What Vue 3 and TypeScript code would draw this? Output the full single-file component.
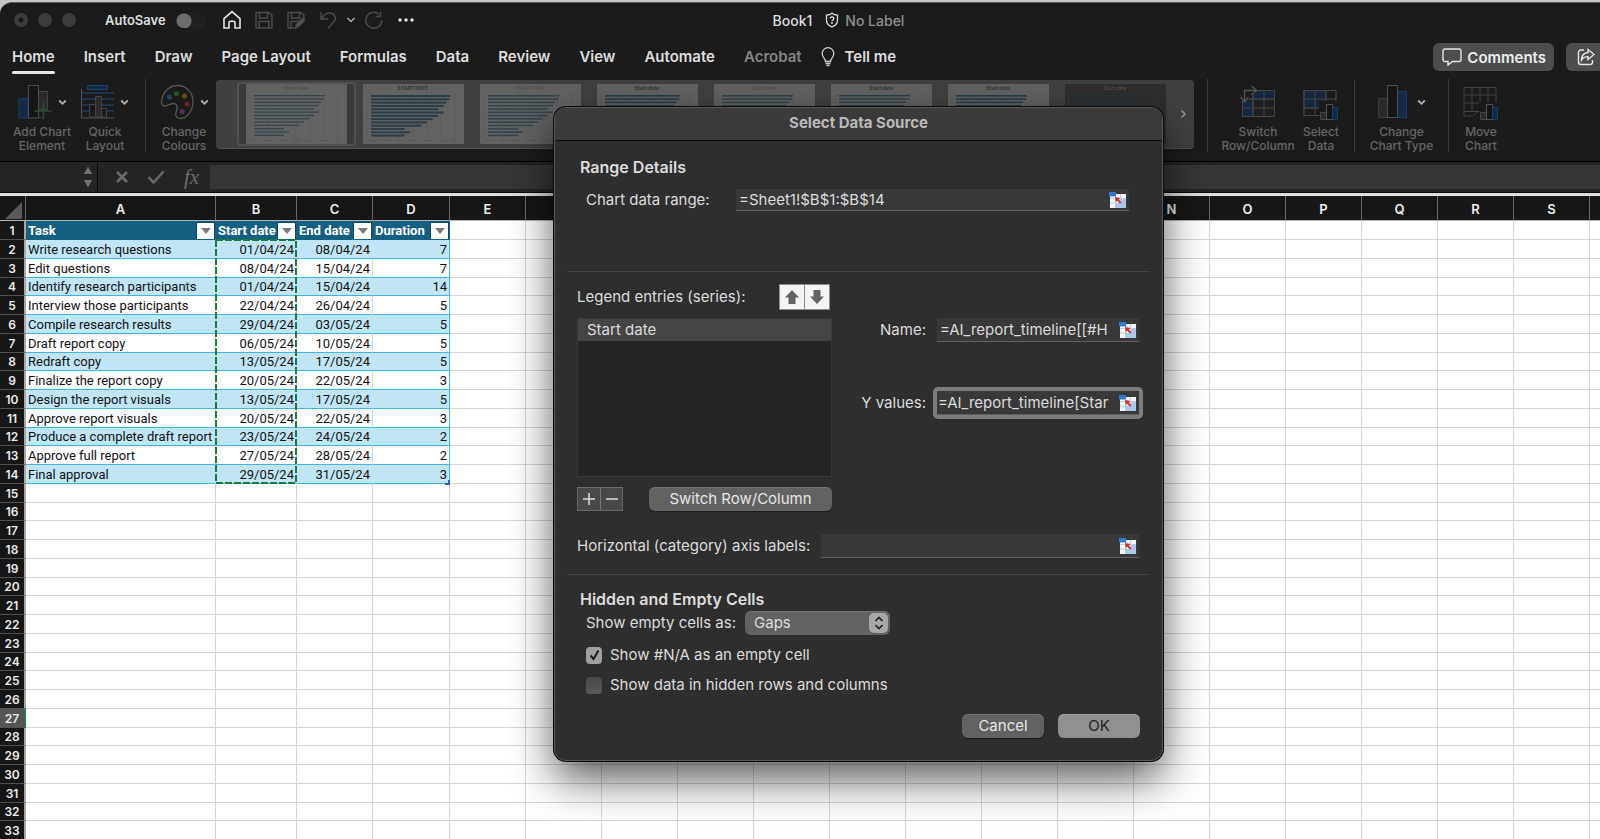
<script setup lang="ts">
import { ref } from 'vue'

const tabs = ['Home', 'Insert', 'Draw', 'Page Layout', 'Formulas', 'Data', 'Review', 'View', 'Automate', 'Acrobat']

// Columns F to M lie under the dialog, so their letters stay blank.
const columns = ['A', 'B', 'C', 'D', 'E', '', '', '', '', '', '', '', '', 'N', 'O', 'P', 'Q', 'R', 'S', '']
const headings = ['Task', 'Start date', 'End date', 'Duration']
const tasks: [string, string, string, number][] = [
  ['Write research questions', '01/04/24', '08/04/24', 7],
  ['Edit questions', '08/04/24', '15/04/24', 7],
  ['Identify research participants', '01/04/24', '15/04/24', 14],
  ['Interview those participants', '22/04/24', '26/04/24', 5],
  ['Compile research results', '29/04/24', '03/05/24', 5],
  ['Draft report copy', '06/05/24', '10/05/24', 5],
  ['Redraft copy', '13/05/24', '17/05/24', 5],
  ['Finalize the report copy', '20/05/24', '22/05/24', 3],
  ['Design the report visuals', '13/05/24', '17/05/24', 5],
  ['Approve report visuals', '20/05/24', '22/05/24', 3],
  ['Produce a complete draft report', '23/05/24', '24/05/24', 2],
  ['Approve full report', '27/05/24', '28/05/24', 2],
  ['Final approval', '29/05/24', '31/05/24', 3],
]
const emptyRows = Array.from({ length: 19 }, (_, i) => i + 15)

interface Thumb { title: string; kind: string; thick: number; scale: number }
const thumbs: Thumb[] = [
  { title: 'Start date', kind: 'soft', thick: 1.3, scale: 1 },
  { title: 'START DATE', kind: 'bold', thick: 2, scale: 1.12 },
  { title: 'START DATE', kind: 'soft', thick: 1.6, scale: 1 },
  { title: 'Start date', kind: 'bold', thick: 1.6, scale: 1.06 },
  { title: 'Start date', kind: 'soft', thick: 1.6, scale: 1 },
  { title: 'Start date', kind: 'bold', thick: 1.3, scale: 1 },
  { title: 'Start date', kind: 'bold', thick: 1.6, scale: 1 },
  { title: 'Start date', kind: 'dark', thick: 1.3, scale: 1 },
]
const bars = [71, 70, 67, 65, 60, 65, 60, 55, 50, 45, 30, 35, 30]

const range = ref('=Sheet1!$B$1:$B$14')
const seriesName = ref('=AI_report_timeline[[#H')
const yValues = ref('=AI_report_timeline[Star')
const axisLabels = ref('')
const emptyAs = ref('Gaps')
const showNa = ref(true)
const showHidden = ref(false)
</script>

<template>
  <div class="window">
    <header class="titlebar">
      <div class="lights"><i class="dot"></i><i></i><i></i></div>
      <label class="autosave">AutoSave <input type="checkbox" class="toggle" /></label>
      <nav class="quick">
        <button aria-label="Home page" class="lit">
          <svg width="20" height="20" viewBox="0 0 20 20"><path d="M2 8.600 10 1.600l8 7V18h-5v-5.200a1.600 1.600 0 0 0-1.600-1.600H8.600A1.600 1.600 0 0 0 7 12.800V18H2Z" stroke-width="1.600" /></svg>
        </button>
        <button aria-label="Save">
          <svg width="20" height="20" viewBox="0 0 20 20"><path d="M2 2.500h13l3 3V18H2ZM5.500 2.500V8h8V2.500M5 18v-6.500h10V18" /></svg>
        </button>
        <button aria-label="Save as">
          <svg width="20" height="20" viewBox="0 0 20 20"><path d="M8 18H2V2.500h13l3 3V9M5.500 2.500V8h8V2.500M5 18v-6.500h8" /><path d="m9.500 18 1-3.500 6-6 2 2-6 6Z" fill="#555" /></svg>
        </button>
        <button aria-label="Undo">
          <svg width="20" height="20" viewBox="0 0 20 20"><path d="M3 2v7h7M3.300 8.500C6 4.500 9 2.600 12.500 3c4.500.6 6 5.600 3.500 8.500L10 18.500" /></svg>
        </button>
        <button aria-label="Undo history" class="small">
          <svg width="10" height="8" viewBox="0 0 10 8"><path d="m1.500 2 3.500 3.500L8.500 2" stroke="#aaa" stroke-width="1.500" /></svg>
        </button>
        <button aria-label="Redo">
          <svg width="20" height="20" viewBox="0 0 20 20"><path d="M17.800 10A8 8 0 1 1 15 4.200M16.500 1.500V6.500H11.500" /></svg>
        </button>
        <button aria-label="More" class="lit">
          <svg width="20" height="20" viewBox="0 0 20 20"><g fill="#e8e8e8" stroke="none"><circle cx="4" cy="10" r="1.700" /><circle cx="10" cy="10" r="1.700" /><circle cx="16" cy="10" r="1.700" /></g></svg>
        </button>
      </nav>
      <div class="file">
        <span>Book1</span>
        <svg width="14" height="16" viewBox="0 0 14 16"><path d="M7 1.200c1.500 1.300 3.300 1.900 5.500 2v5c0 3-2 5.300-5.500 6.600C3.500 13.500 1.500 11.200 1.500 8.200v-5c2.200-.1 4-.7 5.500-2Z" stroke="#ddd" stroke-width="1.300" /><path d="M5.300 6.500a1.700 1.700 0 1 1 2.500 1.500c-.6.300-.8.600-.8 1.300" stroke="#eee" stroke-width="1.300" /><circle cx="7" cy="11" r=".9" fill="#eee" /></svg>
        <span class="muted">No Label</span>
      </div>
    </header>

    <nav class="tabs">
      <a v-for="t in tabs" :key="t" href="#" :class="{ active: t === 'Home', off: t === 'Acrobat' }">{{ t }}</a>
      <a href="#" class="tell">
        <svg width="14" height="20" viewBox="0 0 14 20"><path d="M4.500 14.500c0-3-3.300-4-3.300-8a5.800 5.800 0 0 1 11.600 0c0 4-3.300 5-3.300 8Z" /><path d="M4.500 16.500h5M5.500 18.500h3" /></svg>
        Tell me
      </a>
      <div class="actions">
        <button class="pill">
          <svg width="20" height="18" viewBox="0 0 20 18"><path d="M3 1h14a2 2 0 0 1 2 2v8.500a2 2 0 0 1-2 2h-6.500L6 17v-3.500H3a2 2 0 0 1-2-2V3a2 2 0 0 1 2-2Z" /></svg>
          Comments
        </button>
        <button class="pill share" aria-label="Share">
          <svg width="18" height="18" viewBox="0 0 18 18"><path d="M7 2H4a2.500 2.500 0 0 0-2.500 2.500v9.500A2.500 2.500 0 0 0 4 16.500h9a2.500 2.500 0 0 0 2.500-2.500v-2" /><path d="M11 1.500 17 6.500l-6 5V8.600C8 8.500 6 9.700 4.500 12 4.700 7.500 7 4.800 11 4.500Z" /></svg>
        </button>
      </div>
    </nav>

    <section class="ribbon">
      <div class="group first">
        <button class="tool add">
          <span class="art">
            <svg width="35" height="36" viewBox="0 0 35 36"><path d="M1 14.500h9V34H1Z" fill="#162a45" stroke="#1d3d66" /><path d="M20.500 7.500h9V25M20.500 33.500h3" fill="none" /><path d="M20.500 7.500h9v18h-9Z" fill="#2b2b2b" /><path d="M10.500 1.500h10V34h-10Z" fill="#161616" stroke="#505050" /><path d="M25.500 18.500v17M16.500 27h17" stroke="#2c4f30" stroke-width="1.500" /></svg>
            <svg class="chev" width="9" height="7" viewBox="0 0 9 7"><path d="m1.200 1.500 3.300 3.300 3.300-3.300" /></svg>
          </span>
          Add Chart<br />Element
        </button>
        <button class="tool quickl">
          <span class="art">
            <svg width="34" height="36" viewBox="0 0 34 36"><path d="M1 9h32M1 15h32M1 21h32M1 27h32" stroke="#1d3d5e" stroke-width="1.500" /><path d="M6.500 1.500h20v4h-20Z" fill="#162a45" stroke="#1d4474" /><path d="M8.500 20.500h6V33h-6Zm12 4h5V33h-5Z" fill="#1b1b1b" /><path d="M14.500 12.500h6V33h-6Z" fill="#2b2b2b" /><path d="M.5 5v29H33" stroke="#555" /></svg>
            <svg class="chev" width="9" height="7" viewBox="0 0 9 7"><path d="m1.200 1.500 3.300 3.300 3.300-3.300" /></svg>
          </span>
          Quick<br />Layout
        </button>
      </div>
      <div class="group">
        <button class="tool colours">
          <span class="art">
            <svg width="35" height="36" viewBox="0 0 35 36"><path d="M17.500 1.500C26.500 1.500 33 8.500 33 17.500S27 34.500 20.500 34.500c-4 0-5.500-3-4.500-6 1.500-4.500 2-7-.5-8.500C12.500 18 9 21.500 5 22c-3 0-4-2.500-3.500-5C3 7.500 9.500 1.500 17.500 1.500Z" stroke="#575757" stroke-width="1.300" /><circle cx="9.500" cy="13" r="2.600" fill="#1e4166" stroke="none" /><circle cx="16.500" cy="9.500" r="2.600" fill="#23512c" stroke="none" /><circle cx="24.500" cy="12" r="2.600" fill="#6b4a1c" stroke="none" /><circle cx="27" cy="20" r="2.600" fill="#6b2424" stroke="none" /><circle cx="22" cy="27.500" r="2.600" fill="#573059" stroke="none" /></svg>
            <svg class="chev" width="9" height="7" viewBox="0 0 9 7"><path d="m1.200 1.500 3.300 3.300 3.300-3.300" /></svg>
          </span>
          Change<br />Colours
        </button>
      </div>
      <div class="gallery">
        <div class="strip">
          <button v-for="(th, i) in thumbs" :key="i" class="thumb" :class="[th.kind, { chosen: i === 0 }]" :aria-label="'Chart style ' + (i + 1)">
            <svg width="101" height="60" viewBox="0 0 101 60">
              <rect class="paper" width="101" height="60" />
              <text class="cap" x="50" y="6" text-anchor="middle">{{ th.title }}</text>
              <path class="gridl" d="M22 10v44M36 10v44M50 10v44M64 10v44M78 10v44M92 10v44" />
              <rect v-for="(b, j) in bars" :key="j" class="bar" x="8" :y="11 + j * 3.300" :width="b * th.scale" :height="th.thick" />
              <path class="ticks" d="M4 11v43" stroke-dasharray="1.500 1.800" />
              <path class="ticks" d="M4 56.500h90" stroke-dasharray="9 5" />
            </svg>
          </button>
        </div>
        <button class="more" aria-label="More styles"><svg width="7" height="10" viewBox="0 0 7 10"><path d="m1.500 1.500 3.500 3.500-3.500 3.500" stroke="#999" stroke-width="1.500" /></svg></button>
      </div>
      <div class="group bordered">
        <button class="tool switch">
          <span class="art">
            <svg width="38" height="36" viewBox="0 0 38 36"><path d="M3.500 6.500h32v26h-32Z" fill="#202020" /><path d="M14 6.500h21.500V15H14ZM3.500 15H14v17.500H3.500Z" fill="#16283f" /><path d="M3.500 6.500h32v26h-32ZM3.500 15h32M3.500 24h32M14 6.500v26M25 6.500v26" /><path d="M0 0h17v8l-9 9H0Z" fill="#1b1b1b" stroke="none" /><path d="M5.500 17.500V6.500H17M1.500 13l4 5 4-5M12.500 2l5 4.500-5 4.500" stroke="#555" stroke-width="1.300" /></svg>
          </span>
          Switch<br />Row/Column
        </button>
        <button class="tool select">
          <span class="art">
            <svg width="36" height="36" viewBox="0 0 36 36"><path d="M1 6.500h32v25H1Z" fill="#1b1b1b" /><path d="M1 6.500h22V24H1Z" fill="#16283f" /><path d="M1 6.500h32v25H1ZM1 15h32M1 24h32M12 6.500v25M23 6.500v25" /><path d="M16 17h20v19H16Z" fill="#1b1b1b" stroke="none" /><path d="M17.500 28.500h6v7h-6Z" fill="#2b2b2b" /><path d="M23.500 20.500h6v15h-6Z" fill="#161616" stroke="#555" /><path d="M29.500 23.500h5v12h-5Z" fill="#162a45" stroke="#1d3d66" /></svg>
          </span>
          Select<br />Data
        </button>
      </div>
      <div class="group bordered">
        <button class="tool type">
          <span class="art">
            <svg width="35" height="36" viewBox="0 0 35 36"><path d="M1.500 14.500h9v19h-9Z" fill="#2b2b2b" stroke="#3c3c3c" /><path d="M20.500 7.500h9v26h-9Z" fill="#162a45" stroke="#1d3d66" /><path d="M10.500 1.500h10v32h-10Z" fill="#161616" stroke="#505050" /></svg>
            <svg class="chev" width="9" height="7" viewBox="0 0 9 7"><path d="m1.200 1.500 3.300 3.300 3.300-3.300" /></svg>
          </span>
          Change<br />Chart Type
        </button>
      </div>
      <div class="group bordered">
        <button class="tool move">
          <span class="art">
            <svg width="36" height="36" viewBox="0 0 36 36"><path d="M1 3.500h32v24H1ZM1 11h32M1 19h32M9 3.500V27M17 3.500V27M25 3.500V27M1 27v5h9l5-5" /><path d="M16 18h20v18H16Z" fill="#1b1b1b" stroke="none" /><path d="M17.500 28.500h6v7h-6Z" fill="#2b2b2b" /><path d="M23.500 20.500h6v15h-6Z" fill="#161616" stroke="#555" /><path d="M29.500 23.500h5v12h-5Z" fill="#162a45" stroke="#1d3d66" /></svg>
          </span>
          Move<br />Chart
        </button>
      </div>
    </section>

    <section class="formula">
      <div class="namebox">
        <input aria-label="Name box" />
        <svg width="10" height="22" viewBox="0 0 10 22"><path d="M5 0.500 9.200 8H.8ZM5 21.500 9.200 14H.8Z" fill="#707070" /></svg>
      </div>
      <button aria-label="Cancel entry"><svg width="14" height="14" viewBox="0 0 14 14"><path d="m2 2 10 10M12 2 2 12" stroke="#6a6a6a" stroke-width="2.600" /></svg></button>
      <button aria-label="Enter"><svg width="18" height="14" viewBox="0 0 18 14"><path d="m1.500 7 5 5.500L16.500 1.500" stroke="#666" stroke-width="2.600" /></svg></button>
      <button aria-label="Insert function" class="fx">fx</button>
      <input class="entry" aria-label="Formula" />
    </section>

    <main class="sheet">
      <table>
        <colgroup><col class="c-num" /><col class="c-a" /><col class="c-b" /><col class="c-std" /><col class="c-d" /><col v-for="n in 16" :key="n" class="c-std" /></colgroup>
        <thead>
          <tr>
            <th class="corner"><svg width="17" height="17" viewBox="0 0 17 17"><path d="M17 0v17H0Z" fill="#595959" /></svg></th>
            <th v-for="(c, i) in columns" :key="i">{{ c }}</th>
          </tr>
        </thead>
        <tbody>
          <tr class="heads">
            <th>1</th>
            <td v-for="h in headings" :key="h">
              <div class="head">{{ h }}<button :aria-label="'Filter ' + h"><svg width="10" height="6" viewBox="0 0 10 6"><path d="M0 0h10L5 6Z" fill="#7b7b7b" /></svg></button></div>
            </td>
            <td v-for="n in 16" :key="n"></td>
          </tr>
          <tr v-for="(r, i) in tasks" :key="i" class="data" :class="{ band: i % 2 === 0 }">
            <th>{{ i + 2 }}</th>
            <td class="t">{{ r[0] }}</td>
            <td class="n">{{ r[1] }}</td>
            <td class="n">{{ r[2] }}</td>
            <td class="n last">{{ r[3] }}</td>
            <td v-for="n in 16" :key="n"></td>
          </tr>
          <tr v-for="n in emptyRows" :key="n" :class="{ current: n === 27 }">
            <th>{{ n }}</th>
            <td v-for="c in 20" :key="c"></td>
          </tr>
        </tbody>
      </table>
      <svg class="ants" width="82" height="245" viewBox="0 0 82 245"><rect x="1" y="1" width="80" height="243" /></svg>
      <svg class="handle" width="5" height="5" viewBox="0 0 5 5"><path d="M3 0h2v5H0V3h3Z" fill="#2f5fc0" /></svg>
    </main>

    <form class="dialog" role="dialog" aria-labelledby="dlg-title" @submit.prevent>
      <h1 id="dlg-title">Select Data Source</h1>
      <div class="body">
        <h2>Range Details</h2>
        <div class="line range">
          <label for="f-range">Chart data range:</label>
          <div class="field"><input id="f-range" v-model="range" /><button aria-label="Pick range"><svg class="pick" viewBox="0 0 17 16"><path d="M1 2h16v14H1Z" fill="#f2f5fa" /><path d="M6.500 2v14M11.500 2v14M1 6.500h16M1 11h16" stroke="#c3cfdf" /><path d="M11.500 6.500H17V16H6.500v-5h5Z" fill="#a9c9ea" /><path d="M0 0h7v4.500H0Z" fill="#3379c6" /><path d="m6 5 5.500 1-1.700 1.500 2.700 3-1.500 1.300-2.700-3L6.700 10Z" fill="#c8322f" /></svg></button></div>
        </div>
        <hr />
        <div class="series">
          <div class="left">
            <div class="line legend">
              <span>Legend entries (series):</span>
              <div class="arrows">
                <button aria-label="Move up"><svg width="14" height="14" viewBox="0 0 14 14"><path d="m7 0 7 7.500h-3.500V14h-7V7.500H0Z" fill="#636363" /></svg></button>
                <button aria-label="Move down"><svg width="14" height="14" viewBox="0 0 14 14"><path d="m7 14 7-7.500h-3.500V0h-7v6.500H0Z" fill="#636363" /></svg></button>
              </div>
            </div>
            <ul class="list"><li>Start date</li></ul>
            <div class="line under">
              <div class="plusminus">
                <button aria-label="Add"><svg width="12" height="12" viewBox="0 0 12 12"><path d="M6 0v12M0 6h12" stroke="#ddd" stroke-width="1.500" /></svg></button>
                <button aria-label="Remove"><svg width="12" height="12" viewBox="0 0 12 12"><path d="M0 6h12" stroke="#ddd" stroke-width="1.500" /></svg></button>
              </div>
              <button class="btn wide">Switch Row/Column</button>
            </div>
          </div>
          <div class="right">
            <label for="f-name">Name:</label>
            <div class="field"><input id="f-name" v-model="seriesName" /><button aria-label="Pick name"><svg class="pick" viewBox="0 0 17 16"><path d="M1 2h16v14H1Z" fill="#f2f5fa" /><path d="M6.500 2v14M11.500 2v14M1 6.500h16M1 11h16" stroke="#c3cfdf" /><path d="M11.500 6.500H17V16H6.500v-5h5Z" fill="#a9c9ea" /><path d="M0 0h7v4.500H0Z" fill="#3379c6" /><path d="m6 5 5.500 1-1.700 1.500 2.700 3-1.500 1.300-2.700-3L6.700 10Z" fill="#c8322f" /></svg></button></div>
            <label for="f-y">Y values:</label>
            <div class="field focus"><input id="f-y" v-model="yValues" /><button aria-label="Pick values"><svg class="pick" viewBox="0 0 17 16"><path d="M1 2h16v14H1Z" fill="#f2f5fa" /><path d="M6.500 2v14M11.500 2v14M1 6.500h16M1 11h16" stroke="#c3cfdf" /><path d="M11.500 6.500H17V16H6.500v-5h5Z" fill="#a9c9ea" /><path d="M0 0h7v4.500H0Z" fill="#3379c6" /><path d="m6 5 5.500 1-1.700 1.500 2.700 3-1.500 1.300-2.700-3L6.700 10Z" fill="#c8322f" /></svg></button></div>
          </div>
        </div>
        <div class="line axis">
          <label for="f-axis">Horizontal (category) axis labels:</label>
          <div class="field"><input id="f-axis" v-model="axisLabels" /><button aria-label="Pick labels"><svg class="pick" viewBox="0 0 17 16"><path d="M1 2h16v14H1Z" fill="#f2f5fa" /><path d="M6.500 2v14M11.500 2v14M1 6.500h16M1 11h16" stroke="#c3cfdf" /><path d="M11.500 6.500H17V16H6.500v-5h5Z" fill="#a9c9ea" /><path d="M0 0h7v4.500H0Z" fill="#3379c6" /><path d="m6 5 5.500 1-1.700 1.500 2.700 3-1.500 1.300-2.700-3L6.700 10Z" fill="#c8322f" /></svg></button></div>
        </div>
        <hr />
        <h2 class="hidden-title">Hidden and Empty Cells</h2>
        <div class="line empty">
          <label for="f-empty">Show empty cells as:</label>
          <div class="drop">
            <select id="f-empty" v-model="emptyAs"><option>Gaps</option><option>Zero</option></select>
            <span class="knob"><svg width="10" height="14" viewBox="0 0 10 14"><path d="m1.500 5 3.500-3.500L8.500 5M1.500 9 5 12.500 8.500 9" stroke="#222" stroke-width="1.700" /></svg></span>
          </div>
        </div>
        <label class="check"><span class="box"><input v-model="showNa" type="checkbox" /><svg v-if="showNa" width="11" height="12" viewBox="0 0 11 12"><path d="m1.500 6.500 3 3.500 5-8.500" stroke="#1c1c1c" stroke-width="2" /></svg></span>Show #N/A as an empty cell</label>
        <label class="check"><span class="box"><input v-model="showHidden" type="checkbox" /></span>Show data in hidden rows and columns</label>
        <div class="buttons">
          <button class="btn">Cancel</button>
          <button class="btn primary">OK</button>
        </div>
      </div>
    </form>
  </div>
</template>

<style>
body {
  margin: 0;
  background: #c4c7c4;
  overflow: hidden;
}
</style>

<style scoped>
.window {
  position: relative;
  min-height: 100vh;
  margin-top: 2px;
  box-sizing: border-box;
  border-top: 1px solid #5b5f5c;
  border-radius: 12px 0 0 0;
  background: #1b1b1b;
  overflow: hidden;
  color: #dedede;
  font-family: Inter, "Liberation Sans", sans-serif;
  font-size: 15px;
}
button, input, select {
  font: inherit;
  color: inherit;
  background: none;
  border: 0;
  padding: 0;
  margin: 0;
}
input, select { min-width: 0; outline: none; box-sizing: border-box; }
button { display: flex; align-items: center; justify-content: center; }
svg { display: block; fill: none; flex: none; }
a { color: inherit; text-decoration: none; }

.titlebar { display: flex; align-items: center; height: 36px; padding: 0 0 2px 14px; box-sizing: border-box; }
.lights { display: flex; gap: 10px; }
.lights i { width: 14px; height: 14px; border-radius: 50%; background: #3c3c3c; }
.lights .dot { background: radial-gradient(circle, #181818 2px, #3c3c3c 3px); }
.autosave { display: flex; align-items: center; gap: 10px; margin-left: 29px; font-size: 13px; font-weight: 600; }
.toggle { appearance: none; width: 30px; height: 15px; border-radius: 8px; background: radial-gradient(circle at 8px 8px, #6c6c6c 7px, #202020 8px); }
.quick { display: flex; align-items: center; gap: 12px; margin-left: 16px; }
.quick svg { stroke: #4c4c4c; stroke-width: 1.5px; }
.quick .lit svg { stroke: #e8e8e8; }
.quick .small { margin: 0 -4px; }
.file { display: flex; align-items: center; gap: 9px; margin-left: 357px; font-size: 14px; font-weight: 500; }
.file svg { margin-left: 4px; }
.file .muted { margin-left: -3px; }
.muted { color: #8f8f8f; }

.tabs { display: flex; align-items: center; gap: 29px; height: 36px; padding-left: 12px; font-weight: 600; }
.tabs a { position: relative; line-height: 32px; white-space: nowrap; }
.tabs .active::after { content: ""; position: absolute; left: 0; right: 0; bottom: -1px; height: 3px; border-radius: 2px; background: #e6e6e6; }
.tabs .off { color: #858585; }
.tabs .tell { display: flex; align-items: center; gap: 10px; margin-left: -10px; }
.tell svg { stroke: #cfcfcf; stroke-width: 1.3px; }
.actions { display: flex; gap: 12px; margin-left: auto; align-self: flex-start; padding-top: 4px; }
.pill { gap: 5px; height: 28px; padding: 0 8px 0 9px; border-radius: 6px; background: #4d4d4d; font-weight: 600; color: #eee; }
.pill svg { stroke: #e6e6e6; stroke-width: 1.4px; }
.share { padding: 0 5px 0 11px; border-radius: 6px 0 0 6px; }

.ribbon { display: flex; height: 86px; align-items: flex-start; padding: 4px 87px 0 0; box-sizing: border-box; color: #666; }
.group { display: flex; height: 73px; box-sizing: border-box; }
.group.first { padding: 0 10px 0 9px; border-right: 1px solid #3c3c3c; }
.group.bordered { border-left: 1px solid #3c3c3c; }
.tool { flex-direction: column; justify-content: flex-start; font-size: 12px; line-height: 14px; font-weight: 500; text-align: center; white-space: nowrap; }
.art { display: flex; align-items: center; justify-content: center; gap: 5px; height: 36px; margin: 5px 0 5px; }
.art svg { stroke: #444; }
.art .chev { stroke: #b0b0b0; stroke-width: 1.8px; }
.add { width: 66px; }
.quickl { width: 60px; }
.colours { width: 64px; margin-left: 6px; }
.switch { width: 84px; margin-left: 8px; }
.select { width: 42px; margin-right: 12px; }
.type { width: 93px; }
.move { width: 64px; }
.gallery { display: flex; flex: 1; min-width: 0; height: 69px; margin: 1px 13px 0 0; border-radius: 4px; background: #404040; overflow: hidden; box-sizing: border-box; border-bottom: 1px solid #505050; }
.strip { display: flex; flex: 1; min-width: 0; gap: 16px; padding-left: 30px; overflow: hidden; align-items: center; }
.thumb { flex: none; position: relative; }
.chosen { box-shadow: -8px 0 0 #3b3b3b, 8px 0 0 #3b3b3b; }
.chosen::before { content: ""; position: absolute; inset: -2px -9px; border: 2px solid #515151; border-radius: 4px; }
.paper { fill: #626262; }
.cap { font-size: 5px; fill: #4a4a4a; stroke: none; }
.bar { fill: #35454d; stroke: none; }
.gridl { stroke: #5c5c5c; stroke-width: 1px; }
.ticks { stroke: #565656; stroke-width: 1px; }
.bold .cap { font-weight: 700; fill: #363636; }
.bold .bar { fill: #2a3d48; }
.dark .paper { fill: #2e2e2e; }
.dark .gridl { stroke: #343434; }
.dark .ticks { stroke: #404040; }
.dark .cap { fill: #555; }
.dark .bar { fill: #26353f; }
.more { width: 21px; }

.formula { display: flex; align-items: center; height: 32px; box-sizing: border-box; border-top: 1px solid #000; border-bottom: 1px solid #080808; background: #242424; }
.namebox { display: flex; align-items: center; justify-content: flex-end; width: 98px; height: 100%; padding-right: 4px; box-sizing: border-box; border-right: 1px solid #0c0c0c; }
.namebox input { flex: 1; }
.formula button { width: 34px; }
.formula button:nth-child(2) { margin-left: 7px; }
.formula .fx { width: 37px; font: italic 21px "Liberation Serif", serif; color: #6c6c6c; }
.formula .entry { flex: 1; height: 24px; background: #363636; }

.sheet { position: relative; border-top: 3px solid #dedede; background: #fff; overflow: hidden; }
table { table-layout: fixed; width: 1666px; border-collapse: separate; border-spacing: 0; color: #111; font: 13px/16px Roboto, "Liberation Sans", sans-serif; }
.c-num { width: 26px; }
.c-a { width: 190px; }
.c-b { width: 81px; }
.c-std { width: 76px; }
.c-d { width: 77px; }
th, td { padding: 1px 0 0; box-sizing: border-box; height: 19px; overflow: hidden; white-space: nowrap; }
tbody tr:nth-child(4n) > th, tbody tr:nth-child(4n) > td { height: 18px; }
thead tr > th:nth-child(n) { height: 25px; background: #161616; color: #eee; border-right: 1px solid #6a6a6a; border-bottom: 1px solid #b5b5b5; font: 600 13px/16px Inter, sans-serif; }
thead .corner svg { margin: 4px 0 0 5px; }
tbody th { background: #161616; color: #ececec; border-right: 2px solid #a8a8a8; border-bottom: 1px solid #505050; font: 600 12px/16px Inter, sans-serif; }
tbody td { border-right: 1px solid #d6d6d6; border-bottom: 1px solid #d6d6d6; }
.current th { background: #555; border-right-color: #1d7a45; }
.heads td:nth-child(-n+5) { background: #156082; border-color: #156082; color: #fff; font-weight: 700; }
.head { display: flex; align-items: center; padding: 0 1px 0 2px; }
.head button { width: 17px; height: 16px; margin-left: auto; background: #fff; box-shadow: 0 0 0 1px #0e4660; }
.data td:nth-child(-n+5) { border-bottom-color: #44b3e1; }
.band td:nth-child(-n+5) { background: #c0e6f5; border-right-color: #c0e6f5; }
.data .last { border-right-color: #44b3e1; }
.band .last:nth-child(5) { border-right-color: #44b3e1; }
.t { padding-left: 2px; }
.n { text-align: right; padding-right: 2px; }
.ants { position: absolute; left: 215px; top: 43px; }
.handle { position: absolute; left: 445px; top: 284px; }
.ants rect { stroke: #1a7b3f; stroke-width: 2px; stroke-dasharray: 7 2; }

.dialog {
  position: absolute;
  left: 554px;
  top: 104px;
  width: 609px;
  box-sizing: border-box;
  border: 1px solid #5a5a5a;
  border-radius: 12px;
  background: #2e2e2e;
  box-shadow: 0 0 0 1px #0a0a0a, 0 18px 44px rgba(0, 0, 0, 0.65);
  color: #dcdcdc;
  line-height: 20px;
}
.dialog h1 { margin: 0; height: 32px; border-bottom: 1px solid #101010; border-radius: 11px 11px 0 0; background: #3a3a3a; color: #b9b9b9; font-size: 15px; font-weight: 700; line-height: 30px; text-align: center; }
.body { padding: 16px 12px 22px; }
.dialog h2 { margin: 0 0 0 13px; font-size: 16px; font-weight: 600; line-height: 20px; }
.dialog hr { margin: 0; border: 0; border-top: 1px solid #444; }
.line { display: flex; align-items: center; }
.range { margin: 12px 21px 60px 19px; }
.range .field { width: 393px; height: 22px; margin-left: auto; }
.field { display: flex; align-items: center; height: 24px; padding: 0 3px; box-sizing: border-box; background: #383838; border-bottom: 1px solid #606060; }
.field input { flex: 1; height: 20px; }
.pick { width: 17px; height: 16px; }
.series { display: flex; justify-content: space-between; padding: 12px 11px 0 10px; }
.left { width: 255px; }
.legend { justify-content: space-between; }
.arrows { display: flex; gap: 1px; padding: 1px; margin-right: 2px; background: #8c8c8c; }
.arrows button { width: 24px; height: 24px; background: #f4f4f4; }
.list { height: 159px; margin: 8px 0 0; padding: 0; border: 1px solid #383838; box-sizing: border-box; background: #252525; list-style: none; }
.list li { height: 22px; padding-left: 9px; line-height: 22px; background: #444; }
.under { justify-content: space-between; margin-top: 10px; }
.plusminus { display: flex; border: 1px solid #6a6a6a; background: #484848; }
.plusminus button { width: 22px; height: 22px; }
.plusminus button + button { border-left: 1px solid #777; }
.btn { width: 82px; height: 24px; border-radius: 6px; background: #626262; box-shadow: inset 0 1px 0 #727272, 0 1px 1px #1c1c1c; color: #e6e6e6; }
.wide { width: 183px; }
.primary { background: #909090; color: #222; box-shadow: inset 0 1px 0 #a0a0a0; }
.right { display: grid; grid-template-columns: auto 202px; align-content: start; justify-items: end; gap: 49px 11px; padding-top: 34px; align-items: center; }
.right .field { width: 202px; }
.focus { outline: 4px solid #7c7c7c; border-radius: 1px; padding-left: 1px; }
.axis { gap: 11px; margin: 23px 11px 16px 10px; }
.axis label, .range label, .empty label { white-space: nowrap; }
.axis .field { flex: 1; }
.dialog .hidden-title { margin-top: 14px; }
.empty { gap: 9px; margin: 2px 0 1px 19px; }
.drop { position: relative; width: 145px; }
.drop select { display: block; width: 145px; height: 24px; padding-left: 9px; border-radius: 6px; background: #626262; box-shadow: inset 0 1px 0 #727272; appearance: none; }
.knob { position: absolute; top: 2px; right: 2px; display: grid; place-items: center; width: 19px; height: 20px; border-radius: 5px; background: #a8a8a8; pointer-events: none; }
.check { display: flex; align-items: center; gap: 8px; width: fit-content; margin: 10px 0 0 19px; }
.box { position: relative; display: grid; place-items: center; }
.box input { appearance: none; width: 16px; height: 17px; border-radius: 4px; background: linear-gradient(#484848, #5a5a5a); }
.box input:checked { background: #a0a0a0; }
.box svg { position: absolute; pointer-events: none; }
.buttons { display: flex; justify-content: flex-end; gap: 14px; margin: 19px 10px 0 0; }
</style>
